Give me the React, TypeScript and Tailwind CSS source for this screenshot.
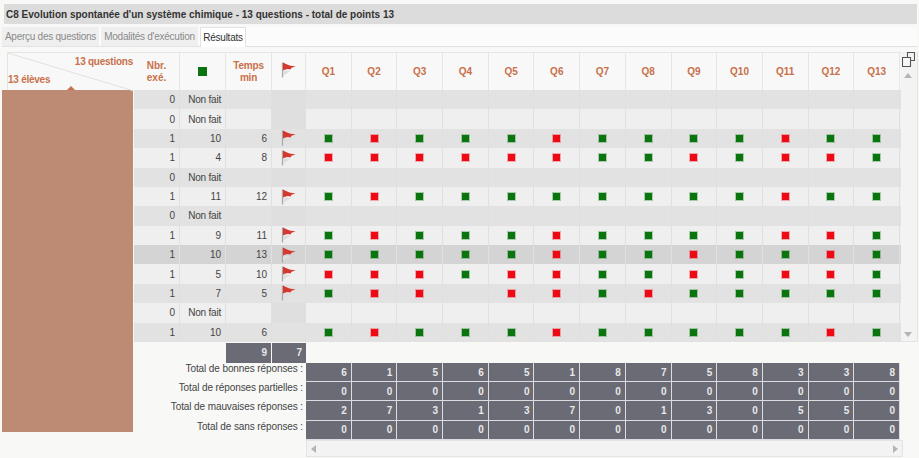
const rows = [
  { nb: 0, score: 'Non fait', time: '', flag: false, marks: '' },
  { nb: 0, score: 'Non fait', time: '', flag: false, marks: '' },
  { nb: 1, score: '10', time: '6', flag: true, marks: 'GRGGGRGGGGRGG' },
  { nb: 1, score: '4', time: '8', flag: true, marks: 'RRRRRRGGRGRRG' },
  { nb: 0, score: 'Non fait', time: '', flag: false, marks: '' },
  { nb: 1, score: '11', time: '12', flag: true, marks: 'GRGGGGGGGGRGG' },
  { nb: 0, score: 'Non fait', time: '', flag: false, marks: '' },
  { nb: 1, score: '9', time: '11', flag: true, marks: 'GRGGGRGGGGRRG' },
  { nb: 1, score: '10', time: '13', flag: true, marks: 'GGGGGRGGRGGRG' },
  { nb: 1, score: '5', time: '10', flag: true, marks: 'RRRGRRGGRGRRG' },
  { nb: 1, score: '7', time: '5', flag: true, marks: 'GRR-RRGRGGGGG' },
  { nb: 0, score: 'Non fait', time: '', flag: false, marks: '' },
  { nb: 1, score: '10', time: '6', flag: false, marks: 'GRGGGRGGGGGRG' },
]

const totals = [
  { label: 'Total de bonnes réponses :', values: [6, 1, 5, 6, 5, 1, 8, 7, 5, 8, 3, 3, 8] },
  { label: 'Total de réponses partielles :', values: [0, 0, 0, 0, 0, 0, 0, 0, 0, 0, 0, 0, 0] },
  { label: 'Total de mauvaises réponses :', values: [2, 7, 3, 1, 3, 7, 0, 1, 3, 0, 5, 5, 0] },
  { label: 'Total de sans réponses :', values: [0, 0, 0, 0, 0, 0, 0, 0, 0, 0, 0, 0, 0] },
]

const questions = Array.from({ length: 13 }, (_, i) => `Q${i + 1}`)

function Flag() {
  return (
    <svg width="15" height="16" viewBox="0 0 15 16" className="shrink-0">
      <path d="M1.5 0.5 V15.5" stroke="#a8a8a8" strokeWidth="1.3" />
      <path d="M2 0.5 L5 2 C8 3.5 11 4 14.5 4.5 L10.5 5.8 L9.5 7.5 C7 6.5 4.5 7 2 8.5 Z" fill="#d4382f" />
      <path d="M2 9.5 C5 8 7 8.5 9.5 9.5 C7 10.5 5 12 2 13.5 Z" fill="#dedede" />
    </svg>
  )
}

function Mark({ color }: { color: string }) {
  if (color === 'G') return <div className="h-[7px] w-[7px] bg-[#0a740f] outline outline-1 outline-[#0a740f]/30" />
  if (color === 'R') return <div className="h-[7px] w-[7px] bg-[#ee0a14] outline outline-1 outline-[#ee0a14]/30" />
  return null
}

export default function App() {
  return (
    <div className="flex h-[458px] w-[919px] flex-col overflow-hidden bg-[#f8f8f7] font-['Liberation_Sans',Arial,sans-serif] text-[10px] text-[#444]">
      <div className="mt-[4px] ml-[4px] mr-[2px] flex h-[20px] items-center bg-[#dcdcdc] px-[2px] font-bold text-[#333]">
        C8 Evolution spontanée d'un système chimique - 13 questions - total de points 13
      </div>

      <div className="mt-[3px] ml-[2px] mr-[2px] flex h-[20px] gap-[2px] border-b border-[#e2e2e2] bg-[#fbfbfb] tracking-[-0.25px] text-[#8a8a8a]">
        <div className="flex h-[19px] w-[97px] items-center justify-center bg-[#efefef]">Aperçu des questions</div>
        <div className="flex h-[19px] w-[97px] items-center justify-center bg-[#efefef]">Modalités d'exécution</div>
        <div className="flex h-[20px] w-[46px] items-center justify-center border-x border-t border-[#e2e2e2] bg-white text-[#333]">
          Résultats
        </div>
      </div>

      <div className="mt-[5px] flex">
        <div className="ml-[2px] w-[131px] shrink-0">
          <div className="relative ml-[5px] h-[38px] border-t border-l border-[#e4e4e4] bg-[#f8f8f8] font-bold tracking-[-0.25px] text-[#c8704a]">
            <svg className="absolute inset-0" width="126" height="38">
              <line x1="0" y1="0" x2="126" y2="38" stroke="#e0e0e0" />
            </svg>
            <span className="absolute top-[1px] right-0">13 questions</span>
            <span className="absolute bottom-[3px] left-0">13 élèves</span>
            <span className="absolute bottom-0 left-[59px] h-0 w-0 border-x-[4px] border-b-[4px] border-x-transparent border-b-[#c8704a]" />
          </div>
          <div className="h-[342px] bg-[#bd8a74]" />
        </div>

        <div className="ml-px flex-1">
          <div className="flex">
            <div className="w-[767px]">
              <div className="grid h-[38px] grid-cols-[46px_46px_46px_34px_repeat(13,45.7px)] border-t border-[#e4e4e4] bg-[#f8f8f8] text-center font-bold text-[#c8704a] [&>div]:border-r [&>div]:border-[#e6e6e6]">
                <div className="flex items-center justify-center leading-[12px]">
                  Nbr.
                  <br />
                  exé.
                </div>
                <div className="flex items-center justify-center">
                  <div className="h-[9px] w-[9px] bg-[#0a740f]" />
                </div>
                <div className="flex items-center justify-center leading-[12px] tracking-[-0.2px]">
                  Temps
                  <br />
                  min
                </div>
                <div className="flex items-center pb-[3px] pl-[9px]">
                  <Flag />
                </div>
                {questions.map((q) => (
                  <div key={q} className="flex items-center justify-center pb-px">
                    {q}
                  </div>
                ))}
              </div>

              {rows.map((row, i) => {
                const bg = i === 8 ? 'bg-[#d4d4d4]' : i % 2 === 0 ? 'bg-[#e2e2e2]' : 'bg-[#efefef]'
                return (
                  <div
                    key={i}
                    className={`grid h-[19.38px] grid-cols-[46px_46px_46px_34px_repeat(13,45.7px)] ${bg} [&>div]:border-r [&>div]:border-[#e0e0e0]`}
                  >
                    <div className="flex items-center justify-end pr-[4px]">{row.nb}</div>
                    <div className={`flex items-center justify-end pr-[4px] ${row.score === 'Non fait' ? 'tracking-[-0.2px]' : ''}`}>
                      {row.score}
                    </div>
                    <div className="flex items-center justify-end pr-[4px]">{row.time}</div>
                    <div className={`flex items-center pl-[9px] ${row.marks === '' ? 'bg-[#dfdfdf]' : ''}`}>
                      {row.flag && <Flag />}
                    </div>
                    {questions.map((q, j) => (
                      <div key={q} className="flex items-center justify-center">
                        <Mark color={row.marks[j] ?? ''} />
                      </div>
                    ))}
                  </div>
                )
              })}
            </div>

            <div className="relative w-[17px] border-b border-r border-[#e4e4e4] bg-[#f3f3f3]">
              <svg className="absolute top-0 left-[1px]" width="13" height="15" viewBox="0 0 13 15" fill="none" stroke="#555" strokeWidth="1.1">
                <path d="M5.5 0.5 H12.5 V8.5 H5.5 Z" />
                <path d="M0.5 5.5 H8.5 V14.5 H0.5 Z" fill="#f8f8f8" />
              </svg>
              <span className="absolute top-[21px] left-[3px] h-0 w-0 border-x-[4px] border-b-[5px] border-x-transparent border-b-[#b5b5b5]" />
              <span className="absolute bottom-[4px] left-[3px] h-0 w-0 border-x-[4px] border-t-[5px] border-x-transparent border-t-[#b5b5b5]" />
            </div>
          </div>

          <div className="mt-px grid h-[20px] grid-cols-[46px_46px_46px_34px] font-bold text-[#e8e8e8]">
            <div className="col-start-3 flex items-center justify-end border-r border-[#f8f8f7] bg-[#6a6b75] pr-[4px]">9</div>
            <div className="flex items-center justify-end bg-[#6a6b75] pr-[4px]">7</div>
          </div>

          {totals.map((total) => (
            <div key={total.label} className="grid h-[19.3px] grid-cols-[172px_repeat(13,45.7px)]">
              <div className="pr-[3px] text-right leading-[12px] tracking-[-0.1px]">{total.label}</div>
              {total.values.map((value, j) => (
                <div
                  key={j}
                  className="flex items-center justify-end border-r border-b border-[#dcdde0] bg-[#6a6b75] pr-[4px] font-bold text-[#e8e8e8]"
                >
                  {value}
                </div>
              ))}
            </div>
          ))}

          <div className="relative ml-[172px] h-[17px] w-[597px] border border-[#e4e4e4] bg-[#f3f3f3]">
            <span className="absolute top-[4px] left-[4px] h-0 w-0 border-y-[4px] border-r-[5px] border-y-transparent border-r-[#b5b5b5]" />
            <span className="absolute top-[4px] right-[4px] h-0 w-0 border-y-[4px] border-l-[5px] border-y-transparent border-l-[#b5b5b5]" />
          </div>
        </div>
      </div>
    </div>
  )
}
